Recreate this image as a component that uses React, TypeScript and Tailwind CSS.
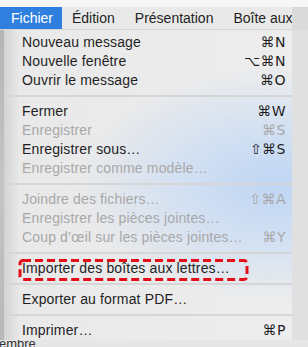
import { Fragment } from "react";

type Item =
  | { kind: "sep" }
  | { kind: "item"; label: string; keys?: string; disabled?: boolean; marked?: boolean };

const items: Item[] = [
  { kind: "item", label: "Nouveau message", keys: "⌘N" },
  { kind: "item", label: "Nouvelle fenêtre", keys: "⌥⌘N" },
  { kind: "item", label: "Ouvrir le message", keys: "⌘O" },
  { kind: "sep" },
  { kind: "item", label: "Fermer", keys: "⌘W" },
  { kind: "item", label: "Enregistrer", keys: "⌘S", disabled: true },
  { kind: "item", label: "Enregistrer sous…", keys: "⇧⌘S" },
  { kind: "item", label: "Enregistrer comme modèle…", disabled: true },
  { kind: "sep" },
  { kind: "item", label: "Joindre des fichiers…", keys: "⇧⌘A", disabled: true },
  { kind: "item", label: "Enregistrer les pièces jointes…", disabled: true },
  { kind: "item", label: "Coup d’œil sur les pièces jointes…", keys: "⌘Y", disabled: true },
  { kind: "sep" },
  { kind: "item", label: "Importer des boîtes aux lettres…", marked: true },
  { kind: "sep" },
  { kind: "item", label: "Exporter au format PDF…" },
  { kind: "sep" },
  { kind: "item", label: "Imprimer…", keys: "⌘P" },
];

const menus = ["Édition", "Présentation", "Boîte aux lettres"];

function DashedBox() {
  return (
    <svg
      className="absolute left-[14px] top-0 pointer-events-none"
      width="232"
      height="23"
      viewBox="0 0 232 23"
    >
      <rect
        x="2"
        y="1.5"
        width="227"
        height="19"
        rx="3"
        fill="none"
        stroke="#e3101a"
        strokeWidth="3"
        strokeDasharray="8 4"
      />
    </svg>
  );
}

function MenuRow({ item }: { item: Extract<Item, { kind: "item" }> }) {
  const tone = item.disabled ? "text-[#a8a8a8]" : "text-[#1f1f1f]";
  return (
    <div className={`relative flex h-[19px] items-center justify-between pl-[18px] pr-[6px] ${tone}`}>
      <span className="whitespace-nowrap">{item.label}</span>
      {item.keys ? (
        <span className="font-['DejaVu_Sans','Liberation_Sans',sans-serif] text-[14px] tracking-[0.5px]">
          {item.keys}
        </span>
      ) : null}
      {item.marked ? <DashedBox /> : null}
    </div>
  );
}

export default function App() {
  return (
    <div className="flex h-[347px] w-[308px] flex-col overflow-hidden bg-[#dddddd] font-['Liberation_Sans',Arial,sans-serif] text-[14px] text-[#1f1f1f]">
      <div className="h-[7px] bg-[#f6f6f6]" />

      {/* menu bar */}
      <div className="flex h-[23px]">
        <div className="flex w-[292px] shrink-0 items-center overflow-hidden whitespace-nowrap border-b border-[#d6d6d6] bg-[#e9e9e9]">
          <div className="flex h-full w-[62px] shrink-0 items-center bg-[#2f7fe0] pl-[11px] text-white">
            Fichier
          </div>
          {menus.map((m) => (
            <div key={m} className="shrink-0 px-[10px]">
              {m}
            </div>
          ))}
        </div>
        <div className="flex-1 bg-[#dadada]" />
      </div>

      {/* dropdown */}
      <div className="relative z-10 flex h-[310px]">
        <div className="w-[4px] shrink-0 bg-[linear-gradient(to_bottom,#b5b5b5,#c4c4c4_50%,#b8b8b8)]" />
        <div className="w-[288px] shrink-0 pt-[3px] tracking-[0.15px] bg-[radial-gradient(ellipse_70%_38%_at_95%_50%,#bfd6f4_0%,rgba(200,219,244,0.75)_45%,rgba(236,236,236,0)_100%),linear-gradient(to_right,#d3d3d3,#e9e9e9_16px,#ededed)]">
          {items.map((it, i) => (
            <Fragment key={i}>
              {it.kind === "sep" ? (
                <div className="flex h-[12px] items-center">
                  <div className="h-[2px] w-full bg-[#d6d6d6]" />
                </div>
              ) : (
                <MenuRow item={it} />
              )}
            </Fragment>
          ))}
        </div>
        <div className="flex-1 bg-[#e0e0e0]" />
      </div>

      {/* window behind */}
      <div className="h-[7px] overflow-hidden bg-[#e6e6e6]">
        <div className="-ml-[1px] text-[13px] leading-[7px] text-[#333]">embre</div>
      </div>
    </div>
  );
}
